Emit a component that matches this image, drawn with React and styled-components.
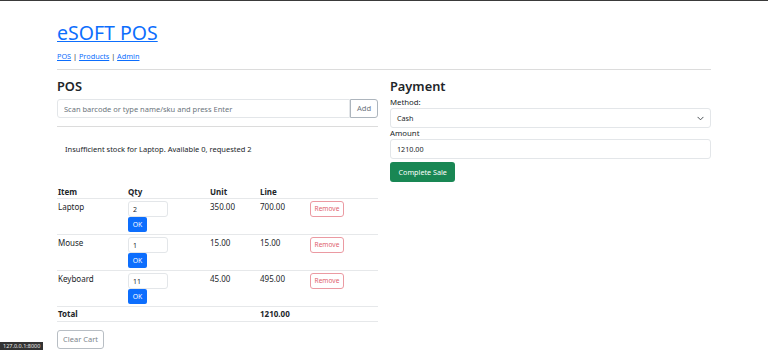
import styled, { createGlobalStyle } from "styled-components";

const GlobalStyle = createGlobalStyle`
  * { box-sizing: border-box; }
  html, body { margin: 0; background: #fff; }
  body {
    font-family: "Noto Sans", "Open Sans", sans-serif;
    font-size: 8px;
    line-height: 1.5;
    color: #212529;
    border-top: 1px solid #3a3a3a;
    height: 350px;
    overflow: hidden;
  }
`;

const Page = styled.div`
  padding: 20px 57px 0;
`;

const Title = styled.h1`
  margin: 0;
  font-size: 19.5px;
  font-weight: 400;
  line-height: 23px;
`;

const Link = styled.a`
  color: #0d6efd;
  text-decoration: underline;
  cursor: pointer;
`;

const Nav = styled.div`
  margin-top: 7px;
  font-size: 7.3px;
  line-height: 11px;
`;

const Divider = styled.hr`
  margin: ${(p) => p.$m};
  border: 0;
  border-top: 1px solid #dcdcdc;
`;

const Row = styled.div`
  display: grid;
  grid-template-columns: 1fr 1fr;
  column-gap: 12px;
`;

const Col = styled.div`
  display: flex;
  flex-direction: column;
`;

const Heading = styled.h3`
  margin: 0 0 ${(p) => p.$mb}px;
  font-size: 12.8px;
  font-weight: 600;
  line-height: 15px;
`;

const InputGroup = styled.div`
  display: flex;
  height: 19px;
`;

const TextInput = styled.input`
  flex: ${(p) => (p.$joined ? 1 : "none")};
  min-width: 0;
  height: ${(p) => p.$h || 19}px;
  padding: 0 6px;
  font: inherit;
  font-size: ${(p) => p.$fs || 7.2}px;
  color: #212529;
  border: 1px solid #e3e6e9;
  border-radius: ${(p) => (p.$joined ? "3px 0 0 3px" : "3px")};
  &::placeholder { color: #6c757d; }
`;

const AddButton = styled.button`
  width: 28px;
  height: 19px;
  padding: 0;
  font: inherit;
  font-size: 7.6px;
  color: #6c757d;
  background: #fff;
  border: 1px solid #adb5bd;
  border-radius: 0 3px 3px 0;
`;

const Alert = styled.div`
  padding: 17px 8px 0;
  font-size: 7.5px;
  line-height: 11.4px;
`;

const Table = styled.table`
  margin-top: 29px;
  width: 100%;
  border-collapse: collapse;
  table-layout: fixed;
  font-size: 8px;
  line-height: 12px;
`;

const Th = styled.th`
  width: ${(p) => p.$w}px;
  text-align: left;
  font-weight: 700;
  padding: 2px 1px 0;
  border-bottom: 1px solid #e6e8ea;
  vertical-align: top;
`;

const Td = styled.td`
  padding: ${(p) => (p.$tight ? "1px" : "2px 1px")};
  border-bottom: 1px solid #e6e8ea;
  vertical-align: top;
  font-weight: ${(p) => (p.$bold ? 700 : 400)};
`;

const QtyInput = styled.input`
  display: block;
  width: 40px;
  height: 16px;
  padding: 0 4px;
  font: inherit;
  font-size: 7px;
  color: #212529;
  border: 1px solid #e3e6e9;
  border-radius: 3px;
`;

const OkButton = styled.button`
  display: block;
  width: 19px;
  height: 15px;
  padding: 0;
  font: inherit;
  font-size: 6.8px;
  color: #fff;
  background: #0d6efd;
  border: 0;
  border-radius: 2px;
`;

const RemoveButton = styled.button`
  width: 34px;
  height: 16px;
  padding: 0;
  font: inherit;
  font-size: 6.6px;
  color: #e0606d;
  background: #fff;
  border: 1px solid #eb9aa2;
  border-radius: 3px;
`;

const ClearButton = styled.button`
  margin-top: 8px;
  align-self: flex-start;
  width: 47px;
  height: 19px;
  padding: 0;
  font: inherit;
  font-size: 7.5px;
  color: #7d858c;
  background: #fff;
  border: 1px solid #b8bec4;
  border-radius: 3px;
`;

const Label = styled.label`
  display: block;
  font-size: 7.8px;
  line-height: 11px;
`;

const Select = styled.div`
  display: flex;
  align-items: center;
  justify-content: space-between;
  height: 20px;
  padding: 0 6px 0 6px;
  font-size: 7.2px;
  border: 1px solid #e3e6e9;
  border-radius: 3px;
`;

const Chevron = styled.svg`
  width: 7px;
  height: 7px;
`;

const CompleteButton = styled.button`
  margin-top: 3px;
  align-self: flex-start;
  height: 20px;
  padding: 0 8.5px;
  font: inherit;
  font-size: 7.2px;
  color: #fff;
  background: #198754;
  border: 0;
  border-radius: 3px;
`;

const StatusBar = styled.div`
  position: fixed;
  left: 0;
  bottom: 0;
  padding: 0 3px;
  height: 8px;
  font-size: 5.5px;
  line-height: 8px;
  color: #e8e8e8;
  background: #333;
`;

const items = [
  { name: "Laptop", qty: "2", unit: "350.00", line: "700.00" },
  { name: "Mouse", qty: "1", unit: "15.00", line: "15.00" },
  { name: "Keyboard", qty: "11", unit: "45.00", line: "495.00" },
];

export default function App() {
  return (
    <>
      <GlobalStyle />
      <Page>
        <Title>
          <Link>eSOFT POS</Link>
        </Title>
        <Nav>
          <Link>POS</Link> | <Link>Products</Link> | <Link>Admin</Link>
        </Nav>
        <Divider $m="7px 0 9px" />
        <Row>
          <Col>
            <Heading $mb={5}>POS</Heading>
            <InputGroup>
              <TextInput $joined $fs={7.5} placeholder="Scan barcode or type name/sku and press Enter" />
              <AddButton>Add</AddButton>
            </InputGroup>
            <Divider $m="8px 0 0" />
            <Alert>Insufficient stock for Laptop. Available 0, requested 2</Alert>
            <Table>
              <thead>
                <tr>
                  <Th $w={70}>Item</Th>
                  <Th $w={82}>Qty</Th>
                  <Th $w={50}>Unit</Th>
                  <Th $w={50}>Line</Th>
                  <Th />
                </tr>
              </thead>
              <tbody>
                {items.map((it) => (
                  <tr key={it.name}>
                    <Td>{it.name}</Td>
                    <Td>
                      <QtyInput defaultValue={it.qty} />
                      <OkButton>OK</OkButton>
                    </Td>
                    <Td>{it.unit}</Td>
                    <Td>{it.line}</Td>
                    <Td>
                      <RemoveButton>Remove</RemoveButton>
                    </Td>
                  </tr>
                ))}
                <tr>
                  <Td $tight $bold>Total</Td>
                  <Td $tight />
                  <Td $tight />
                  <Td $tight $bold>1210.00</Td>
                  <Td $tight />
                </tr>
              </tbody>
            </Table>
            <ClearButton>Clear Cart</ClearButton>
          </Col>
          <Col>
            <Heading $mb={3}>Payment</Heading>
            <Label>Method:</Label>
            <Select>
              <span>Cash</span>
              <Chevron viewBox="0 0 16 16">
                <path d="M2 5l6 6 6-6" fill="none" stroke="#343a40" strokeWidth="2" strokeLinecap="round" strokeLinejoin="round" />
              </Chevron>
            </Select>
            <Label>Amount</Label>
            <TextInput $h={20} defaultValue="1210.00" />
            <CompleteButton>Complete Sale</CompleteButton>
          </Col>
        </Row>
      </Page>
      <StatusBar>127.0.0.1:8000</StatusBar>
    </>
  );
}
